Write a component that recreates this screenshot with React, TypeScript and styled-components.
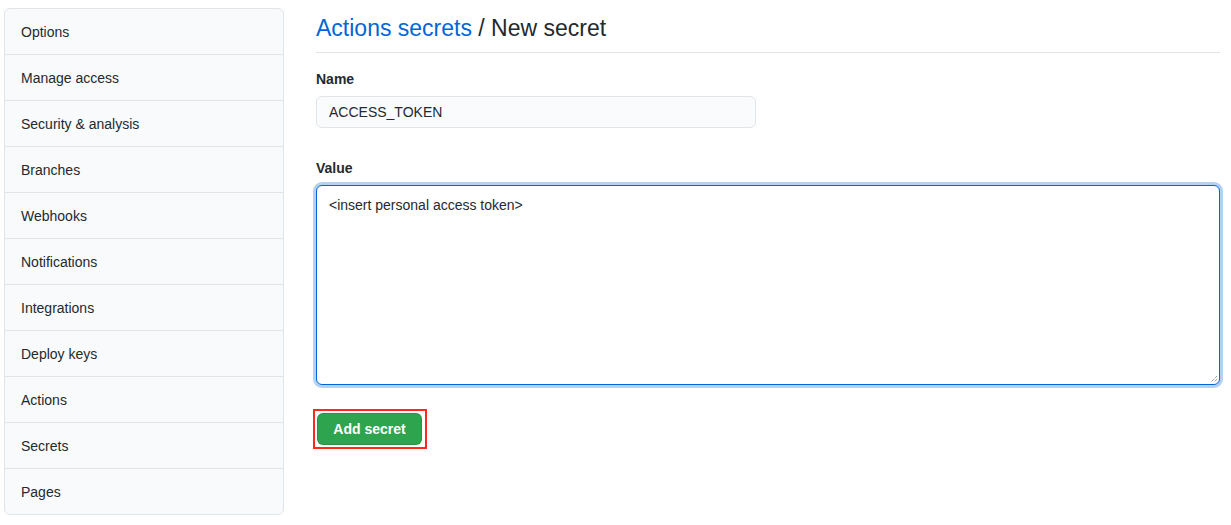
import React from "react";
import styled, { createGlobalStyle } from "styled-components";

const Global = createGlobalStyle`
  html, body { margin: 0; padding: 0; background: #ffffff; }
  body {
    font-family: "Liberation Sans", Arial, sans-serif;
    color: #24292e;
    font-size: 14px;
  }
`;

const Page = styled.div`
  display: flex;
  align-items: flex-start;
  padding: 8px 11px 0 4px;
  gap: 32px;
`;

const Menu = styled.nav`
  width: 278px;
  flex: none;
  border: 1px solid #e1e4e8;
  border-radius: 6px;
  overflow: hidden;
  background: #f9fafb;
`;

const MenuItem = styled.div`
  padding: 13px 16px 11px;
  line-height: 21px;
  font-size: 14px;
  color: #24292e;
  & + & { border-top: 1px solid #e1e4e8; }
`;

const Main = styled.main`
  flex: 1;
  min-width: 0;
`;

const Header = styled.div`
  padding: 5px 0 9px;
  border-bottom: 1px solid #e1e4e8;
  margin-bottom: 16px;
`;

const Title = styled.h2`
  margin: 0;
  font-size: 23px;
  font-weight: 400;
  line-height: 30px;
  color: #24292e;
`;

const Crumb = styled.a`
  color: #0366d6;
  text-decoration: none;
`;

const Field = styled.div<{ $gap?: number }>`
  margin-bottom: ${(p) => p.$gap ?? 0}px;
`;

const Label = styled.label`
  display: block;
  font-weight: 700;
  font-size: 14px;
  line-height: 21px;
  margin-bottom: 6px;
`;

const Input = styled.div`
  box-sizing: border-box;
  width: 440px;
  height: 32px;
  padding: 0 12px 1px;
  display: flex;
  align-items: center;
  background: #fafbfc;
  border: 1px solid #e1e4e8;
  border-radius: 6px;
  font-size: 14px;
  color: #24292e;
`;

const TextArea = styled.div`
  position: relative;
  box-sizing: border-box;
  width: 100%;
  height: 200px;
  padding: 9px 12px;
  border: 1px solid #0366d6;
  border-radius: 6px;
  box-shadow: 0 0 0 3px rgba(3, 102, 214, 0.3);
  font-size: 14px;
  line-height: 20px;
  background: #ffffff;
`;

const Grip = styled.svg`
  position: absolute;
  right: 1px;
  bottom: 1px;
`;

const Highlight = styled.div`
  display: inline-flex;
  margin: 24px 0 0 -3px;
  padding: 2px 3px 2px 2px;
  border: 2px solid #ff2a1a;
`;

const Button = styled.button`
  box-sizing: border-box;
  height: 32px;
  width: 105px;
  padding: 0;
  white-space: nowrap;
  background: #2ea44f;
  color: #ffffff;
  font-family: "Liberation Sans", Arial, sans-serif;
  font-weight: 700;
  font-size: 14px;
  border: 1px solid rgba(27, 31, 35, 0.15);
  border-radius: 6px;
`;

const items = [
  "Options",
  "Manage access",
  "Security & analysis",
  "Branches",
  "Webhooks",
  "Notifications",
  "Integrations",
  "Deploy keys",
  "Actions",
  "Secrets",
  "Pages",
];

export default function App() {
  return (
    <>
      <Global />
      <Page>
        <Menu>
          {items.map((i) => (
            <MenuItem key={i}>{i}</MenuItem>
          ))}
        </Menu>
        <Main>
          <Header>
            <Title>
              <Crumb href="#">Actions secrets</Crumb> / New secret
            </Title>
          </Header>
          <Field $gap={30}>
            <Label>Name</Label>
            <Input>ACCESS_TOKEN</Input>
          </Field>
          <Field>
            <Label>Value</Label>
            <TextArea>
              &lt;insert personal access token&gt;
              <Grip width="9" height="9" viewBox="0 0 9 9">
                <path d="M8 2 L2 8 M8 5 L5 8" stroke="#777" strokeWidth="1" strokeDasharray="1 1" />
              </Grip>
            </TextArea>
          </Field>
          <Highlight>
            <Button>Add secret</Button>
          </Highlight>
        </Main>
      </Page>
    </>
  );
}
